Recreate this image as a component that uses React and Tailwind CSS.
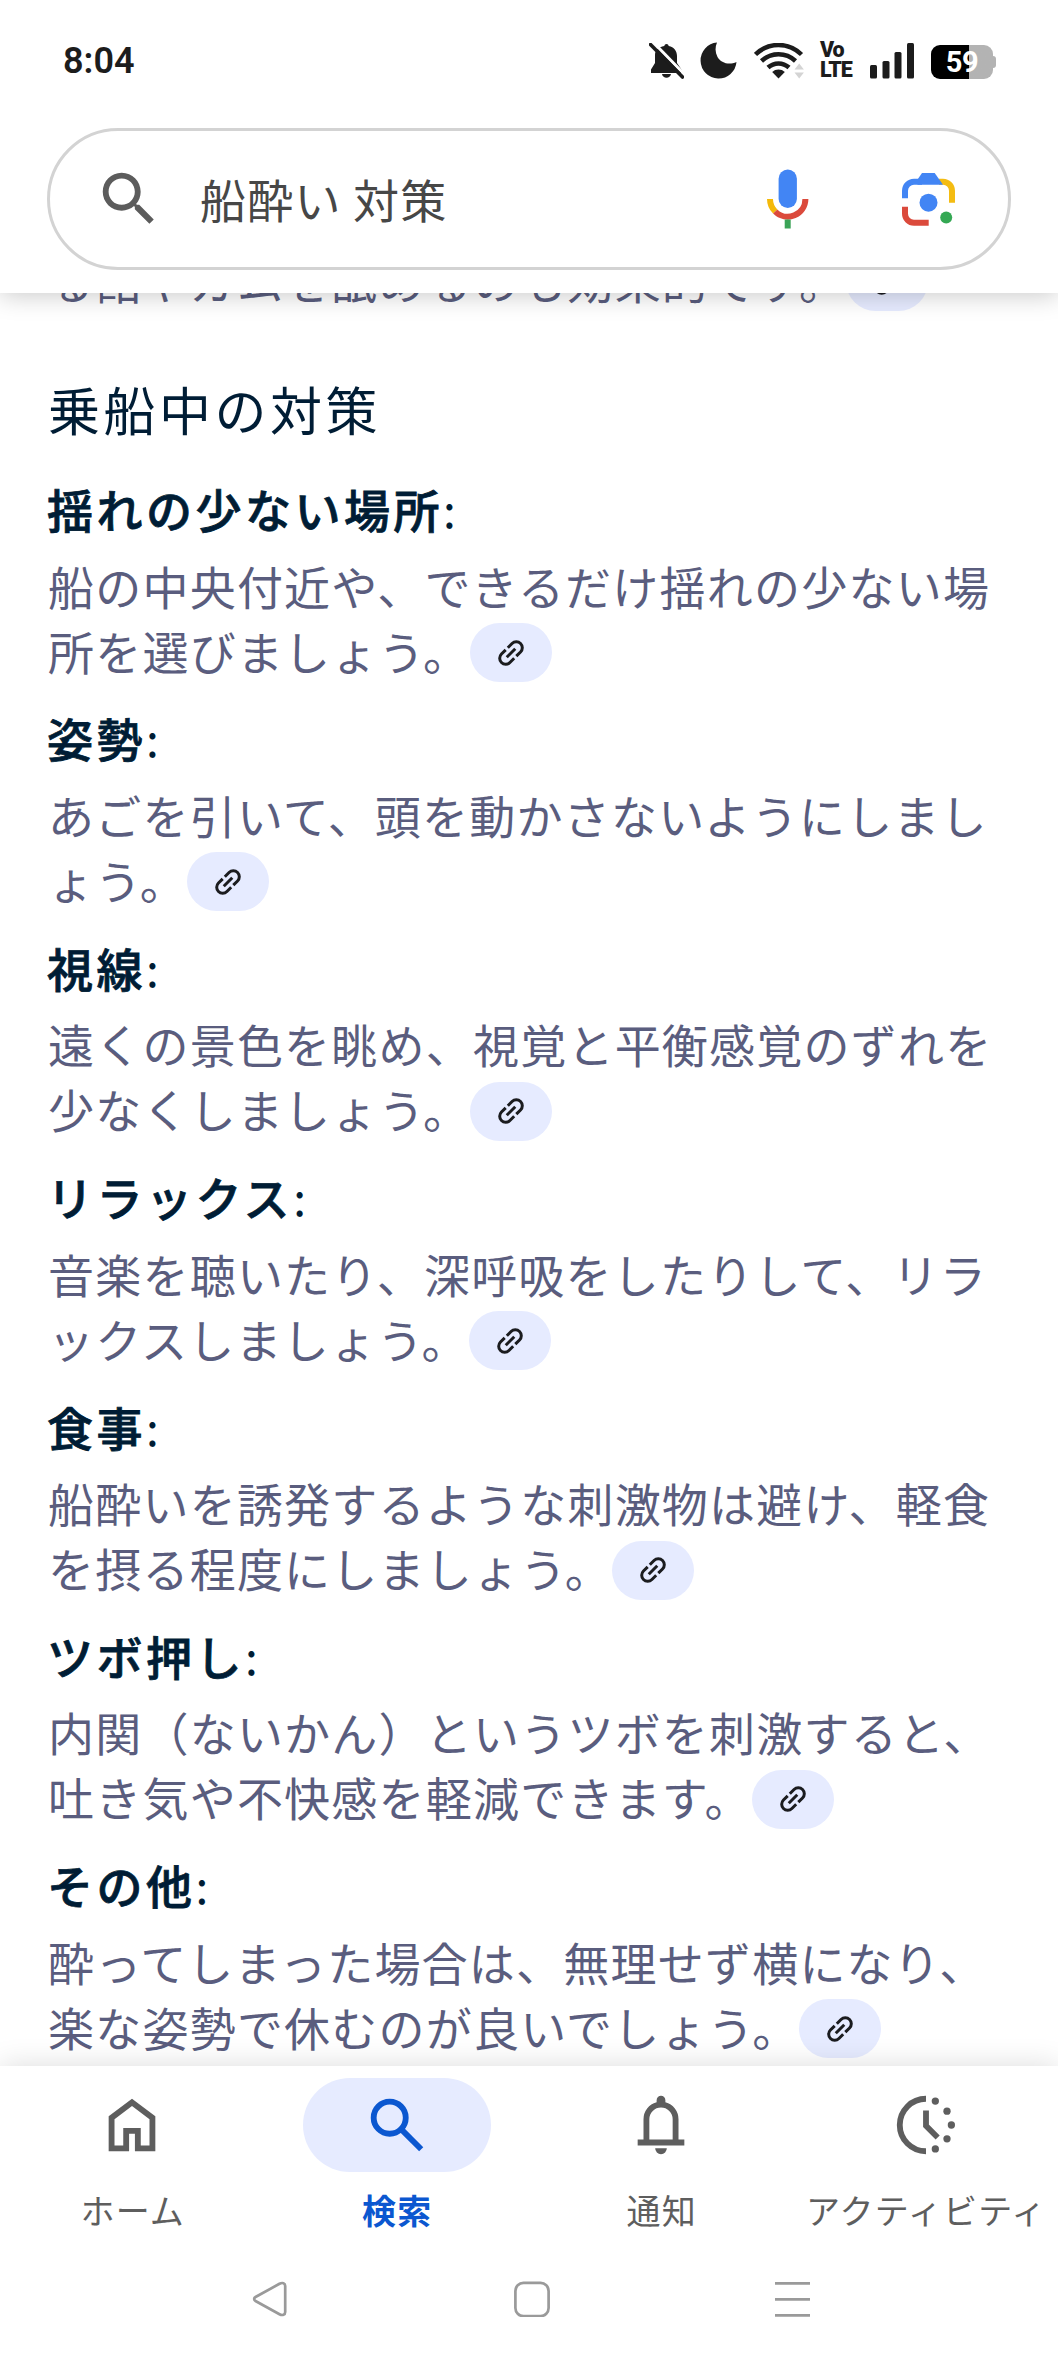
import React from 'react'

const sections = [
  { title: '揺れの少ない場所', lines: ['船の中央付近や、できるだけ揺れの少ない場', '所を選びましょう。'] },
  { title: '姿勢', lines: ['あごを引いて、頭を動かさないようにしまし', 'ょう。'] },
  { title: '視線', lines: ['遠くの景色を眺め、視覚と平衡感覚のずれを', '少なくしましょう。'] },
  { title: 'リラックス', lines: ['音楽を聴いたり、深呼吸をしたりして、リラ', 'ックスしましょう。'] },
  { title: '食事', lines: ['船酔いを誘発するような刺激物は避け、軽食', 'を摂る程度にしましょう。'] },
  { title: 'ツボ押し', lines: ['内関（ないかん）というツボを刺激すると、', '吐き気や不快感を軽減できます。'] },
  { title: 'その他', lines: ['酔ってしまった場合は、無理せず横になり、', '楽な姿勢で休むのが良いでしょう。'] }
]

function HomeIcon() {
  return (
    <svg className="size-[70px]" viewBox="0 0 24 24" fill="currentColor">
      <path d="M6 19h3v-6h6v6h3v-9l-6-4.5L6 10v9Zm-2 2V9l8-6 8 6v12h-7v-6h-2v6H4Z" />
    </svg>
  )
}

function NavSearchIcon() {
  return (
    <svg className="size-[70px]" viewBox="0 0 24 24" fill="none" stroke="currentColor" strokeWidth="2">
      <circle cx="9.5" cy="9.5" r="5.5" />
      <path d="M13.4 13.4l6.9 6.9" />
    </svg>
  )
}

function BellIcon() {
  return (
    <svg className="size-[70px]" viewBox="0 0 24 24" fill="currentColor">
      <path d="M4 19v-2h2v-7q0-2.075 1.25-3.688T10.5 4.2v-.7q0-.625.438-1.062T12 2t1.063.438T13.5 3.5v.7q2 .5 3.25 2.113T18 10v7h2v2H4Zm8 3q-.825 0-1.412-.587T10 20h4q0 .825-.587 1.413T12 22ZM8 17h8v-7q0-1.65-1.175-2.825T12 6 9.175 7.175 8 10v7Z" />
    </svg>
  )
}

function ActivityIcon() {
  return (
    <svg className="size-[70px]" viewBox="0 0 24 24" fill="none" stroke="currentColor" strokeWidth="2">
      <path d="M12 3a9 9 0 0 0 0 18" />
      <path d="M12 7v5.3l4 4" />
      <g fill="currentColor" stroke="none">
        <circle cx="15.2" cy="3.8" r="1.25" />
        <circle cx="19.2" cy="7.25" r="1.25" />
        <circle cx="20.7" cy="12" r="1.25" />
        <circle cx="19.2" cy="16.75" r="1.25" />
        <circle cx="15.2" cy="20.2" r="1.25" />
      </g>
    </svg>
  )
}

const tabs = [
  { label: 'ホーム', Icon: HomeIcon },
  { label: '検索', Icon: NavSearchIcon, active: true },
  { label: '通知', Icon: BellIcon },
  { label: 'アクティビティ', Icon: ActivityIcon }
]

function StatusBar() {
  return (
    <div className="flex h-[121px] items-center justify-between pr-[62px] pl-[63px] text-[#1c1c1c]">
      <span className="font-['Roboto'] text-[36px] font-semibold leading-none">8:04</span>
      <div className="flex items-center">
        {/* Muted bell */}
        <svg className="mr-[16px] h-[36px] w-[35px]" viewBox="0 0 35 36" fill="currentColor">
          <path d="M17.5 1c1.2 0 2 .8 2.2 2C25 4 28 8 28 13v7l4.5 6.5V30H2v-3.5L6 20v-8c0-5 3.5-8 9.3-9 .2-1.2 1-2 2.2-2z" />
          <path d="M13 31h9c-.5 2.5-2.3 3.8-4.5 3.8S13.5 33.5 13 31z" />
          <path d="M3 -2l35 36" stroke="#fff" strokeWidth="3" />
          <path d="M1.5 1.5l32 32.5" stroke="currentColor" strokeWidth="3.6" strokeLinecap="round" />
        </svg>
        <svg className="mr-[17px] size-[37px]" viewBox="0 0 37 37" fill="currentColor">
          <path d="M17 .5A18 18 0 1 0 36.5 20C29 23.5 21 21 17.5 15 15 10 15 5 17 .5z" />
        </svg>
        <svg className="mr-[16px] h-[36px] w-[50px]" viewBox="0 0 50 36" fill="none" stroke="currentColor">
          <path d="M1.5 11.5C14.5-1.2 34.5-1.2 47.5 11.5" strokeWidth="4.5" />
          <path d="M7.5 18C17 9 32 9 41.5 18" strokeWidth="4.5" />
          <path d="M14 24.5c6-5.5 15-5.5 21 0" strokeWidth="4.5" />
          <path d="M24.5 35.5l-6.3-6.5c3.5-3.3 9.1-3.3 12.6 0z" fill="currentColor" stroke="none" />
          <path d="M40.5 26.5l4.7-6 4.7 6zM40.5 29.5l4.7 6 4.7-6z" fill="#d4d4d4" stroke="none" />
        </svg>
        <div className="-mt-[2px] mr-[17px] w-[33px] whitespace-pre font-['Roboto'] text-[21.5px] font-black leading-[20px] tracking-[-1.2px]">
          {'Vo\nLTE'}
        </div>
        <svg className="mr-[16px] h-[36px] w-[45px]" viewBox="0 0 45 36" fill="currentColor">
          <rect x="0" y="22" width="7" height="13.5" rx="1.5" />
          <rect x="12.5" y="18" width="7" height="17.5" rx="1.5" />
          <rect x="24.5" y="9" width="7" height="26.5" rx="1.5" />
          <rect x="37" y="0" width="7" height="35.5" rx="1.5" />
        </svg>
        {/* Battery */}
        <div className="mt-[3px] flex items-center">
          <div className="flex h-[34px] w-[62px] items-center justify-center rounded-[9px] bg-linear-to-r from-black from-[62%] to-[#b3b3b3] to-[62%] font-['Roboto'] text-[29px] font-bold leading-none tracking-[-0.5px] text-white">
            59
          </div>
          <div className="h-[12px] w-[3px] rounded-r-[3px] bg-[#b3b3b3]" />
        </div>
      </div>
    </div>
  )
}

function SearchBox() {
  return (
    <div className="mx-[47px] mt-[7px] flex h-[142px] items-center rounded-full border-[3px] border-[#d3d3d3] pr-[53px] pl-[44px]">
      <svg className="size-[70px] text-[#5c5c5c]" viewBox="0 0 24 24" fill="currentColor">
        <path d="M15.5 14h-.79l-.28-.27C15.41 12.59 16 11.11 16 9.5 16 5.91 13.09 3 9.5 3S3 5.91 3 9.5 5.91 16 9.5 16c1.61 0 3.09-.59 4.23-1.57l.27.28v.79l5 4.99L20.49 19l-4.99-5zm-6 0C7.01 14 5 11.99 5 9.5S7.01 5 9.5 5 14 7.01 14 9.5 11.99 14 9.5 14z" />
      </svg>
      <span className="-mt-[2px] ml-[36px] flex-1 text-[46px] leading-none tracking-[1.2px] text-[#474747]">船酔い 対策</span>
      {/* Voice search */}
      <svg className="mr-[93px] h-[60px] w-[42px]" viewBox="0 0 42 60" fill="none" strokeWidth="6">
        <rect x="11.6" y="0.5" width="18.3" height="38.5" rx="9.15" fill="#4285f4" />
        <path d="M3 30a17.7 17.7 0 0 0 5.2 12.5" stroke="#f4b90a" />
        <path d="M8.2 42.5A17.7 17.7 0 0 0 38.4 30" stroke="#db4a3c" />
        <path d="M20.7 50.5v9" stroke="#3ba357" />
      </svg>
      {/* Lens */}
      <svg className="size-[53px]" viewBox="0 0 53 53" fill="none" strokeWidth="6">
        <path d="M37 8.7h4a9 9 0 0 1 9 9v12" stroke="#f4bc12" />
        <path d="M3 25.2v-7.5a9 9 0 0 1 9-9h8" stroke="#4285f4" />
        <path d="M15.5 6.5L20 0h12.7L41 11.7H15.5z" fill="#4285f4" />
        <path d="M3 33.7v7a9 9 0 0 0 9 9h14.7" stroke="#db4a3c" />
        <circle cx="26.5" cy="29.7" r="9" fill="#4285f4" />
        <circle cx="44.2" cy="44.4" r="6" fill="#34a853" />
      </svg>
    </div>
  )
}

function LinkChip() {
  return (
    <span className="flex h-[59px] w-[82px] shrink-0 items-center justify-center rounded-full bg-[#e6ebff] text-[#1b1c1f]">
      <svg className="size-[36px] -rotate-45" viewBox="0 0 24 24" fill="currentColor">
        <path d="M11 17H7q-2.075 0-3.537-1.463T2 12t1.463-3.537T7 7h4v2H7q-1.25 0-2.125.875T4 12t.875 2.125T7 15h4v2Zm-3-4v-2h8v2H8Zm5 4v-2h4q1.25 0 2.125-.875T20 12t-.875-2.125T17 9h-4V7h4q2.075 0 3.538 1.463T22 12t-1.463 3.538T17 17h-4Z" />
      </svg>
    </span>
  )
}

function BodyLine({ text, chip }) {
  return (
    <div className="flex h-[65px] items-center whitespace-nowrap text-[46px] leading-[65px] tracking-[1.22px] text-[#5a5d7e]">
      <span className="-mt-[5px]">{text}</span>
      {chip && <LinkChip />}
    </div>
  )
}

export default function App() {
  return (
    <div className="flex h-[2364px] w-[1058px] flex-col overflow-hidden bg-white font-['Noto_Sans_CJK_JP',sans-serif]">
      <header className="relative z-10 h-[293px] shrink-0 bg-white shadow-[0_2px_24px_rgba(0,0,0,0.22)]">
        <StatusBar />
        <SearchBox />
      </header>

      <main className="h-[1773px] shrink-0 overflow-hidden pl-[48px]">
        {/* Scrolled partly under the header */}
        <div className="-mt-[44px]">
          <BodyLine text="る飴やガムを舐めるのも効果的です。" chip />
        </div>
        <h2 className="mt-[57px] h-[85px] text-[52px] leading-[76px] tracking-[3.5px] text-[#001d35]">
          乗船中の対策
        </h2>
        {sections.map((section) => (
          <section key={section.title} className="h-[229.4px]">
            <h3 className="-ml-px h-[99px] pt-[20px] text-[46px] font-medium leading-[65px] tracking-[3.5px] text-[#001d35]">
              <span className="[-webkit-text-stroke:0.8px_#001d35]">{section.title}</span>
              <span className="font-normal">:</span>
            </h3>
            {section.lines.map((line, i) => (
              <BodyLine key={line} text={line} chip={i === section.lines.length - 1} />
            ))}
          </section>
        ))}
      </main>

      <nav className="relative z-10 flex h-[193px] shrink-0 bg-white pt-[12px] shadow-[0_0_28px_rgba(0,0,0,0.14)]">
        {tabs.map(({ label, Icon, active }) => (
          <div
            key={label}
            className={`flex flex-1 basis-0 flex-col items-center ${active ? 'text-[#0b57d0]' : 'text-[#5e5e5e]'}`}
          >
            <div className={`flex h-[94px] w-[188px] items-center justify-center rounded-full ${active ? 'bg-[#e6ebff]' : ''}`}>
              <Icon />
            </div>
            <span
              className={`mt-[13px] ml-px whitespace-nowrap text-[34px] leading-[50px] tracking-[1.2px] ${active ? 'font-bold' : ''}`}
            >
              {label}
            </span>
          </div>
        ))}
      </nav>

      {/* Android system buttons */}
      <footer className="relative z-10 flex flex-1 items-start bg-white pt-[22px] pl-[252px] text-[#9a9a9a]">
        <svg className="mr-[226px] size-[36px]" viewBox="0 0 36 36" fill="none" stroke="currentColor" strokeWidth="2.7" strokeLinejoin="round">
          <path d="M3.5 16L27.5 2.8c3-1.6 5.7-.6 5.7 2.2v26c0 2.8-2.7 3.8-5.7 2.2L3.5 20c-1.8-1-1.8-3 0-4z" />
        </svg>
        <svg className="mr-[225px] size-[36px]" viewBox="0 0 36 36" fill="none" stroke="currentColor" strokeWidth="2.7">
          <rect x="1.4" y="1.9" width="33.2" height="33.2" rx="8" />
        </svg>
        <svg className="size-[36px]" viewBox="0 0 36 36" fill="none" stroke="currentColor" strokeWidth="2.7">
          <path d="M0 2.4h35M0 18.4h35M0 34.4h35" />
        </svg>
      </footer>
    </div>
  )
}
